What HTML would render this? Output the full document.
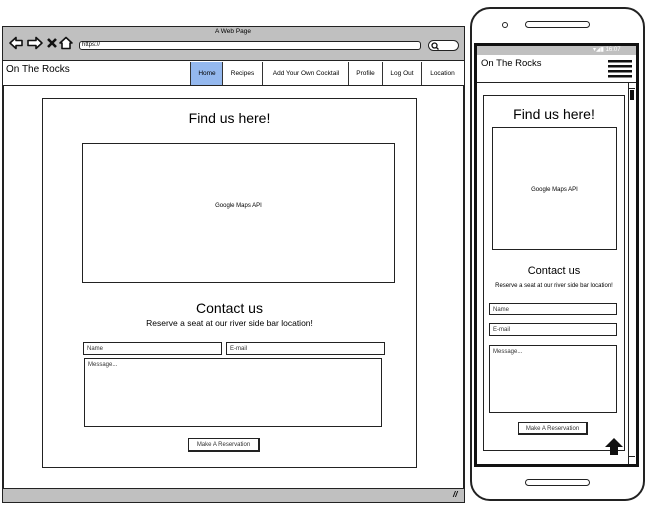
<!DOCTYPE html>
<html><head><meta charset="utf-8"><style>
*{margin:0;padding:0;box-sizing:border-box}
body{width:648px;height:511px;background:#fff;position:relative;overflow:hidden;font-family:"Liberation Sans",sans-serif;color:#000}
.a{position:absolute}
.b{position:absolute;border:1.5px solid #222;background:#fff}
.t{position:absolute;white-space:nowrap}
.in{font-size:6px;padding:3px 3px 0;color:#333;line-height:6px}
.tab{position:absolute;top:62px;height:23px;border-left:1px solid #333;font-size:6.5px;display:flex;align-items:center;justify-content:center}
</style></head><body>
<!-- browser -->
<div class="a" style="left:2px;top:26px;width:463px;height:477px;border:2px solid #222;background:#fff"></div>
<div class="a" style="left:3px;top:27px;width:461px;height:34px;background:#c0c0c0;border-bottom:1px solid #222"></div>
<div class="t" style="left:215px;top:28px;font-size:6.5px">A Web Page</div>
<svg class="a" style="left:8px;top:36px" width="66" height="14" viewBox="0 0 66 14" fill="#fff" stroke="#111" stroke-width="1.6" stroke-linejoin="round">
<path d="M2 7 L8 1.5 V4.5 H14 V9.5 H8 V12.5 Z"/>
<path d="M34 7 L28 1.5 V4.5 H20 V9.5 H28 V12.5 Z"/>
<path d="M40 3 L48 11 M48 3 L40 11" stroke-width="2.6" fill="none"/>
<path d="M52 7 L58 1.5 L64 7 H62 V12.5 H54 V7 Z"/>
</svg>
<div class="a" style="left:79px;top:41px;width:342px;height:9px;background:#fff;border:1.5px solid #222;border-radius:3px"></div>
<div class="t" style="left:82px;top:42px;font-size:6px">https://</div>
<div class="a" style="left:428px;top:40px;width:31px;height:11px;background:#fff;border:1.5px solid #222;border-radius:6px"></div>
<svg class="a" style="left:431px;top:42px" width="8" height="8" viewBox="0 0 8 8"><circle cx="3.5" cy="3.5" r="2.5" fill="none" stroke="#111" stroke-width="1.3"/><path d="M5.5 5.5 L7.5 7.5" stroke="#111" stroke-width="1.3"/></svg>
<div class="a" style="left:3px;top:61px;width:461px;height:25px;border-bottom:1.5px solid #222;background:#fff"></div>
<div class="t" style="left:6px;top:64px;font-size:10px">On The Rocks</div>
<div class="tab" style="left:190px;width:33px;background:#94b8ee">Home</div>
<div class="tab" style="left:222px;width:40px">Recipes</div>
<div class="tab" style="left:262px;width:87px">Add Your Own Cocktail</div>
<div class="tab" style="left:348px;width:34px">Profile</div>
<div class="tab" style="left:382px;width:39px">Log Out</div>
<div class="tab" style="left:421px;width:42px">Location</div>
<div class="a" style="left:3px;top:488px;width:461px;height:14px;background:#c0c0c0;border-top:1.5px solid #222"></div>
<div class="t" style="left:453px;top:490px;font-size:8px;font-style:italic;font-weight:bold">//</div>
<!-- content -->
<div class="b" style="left:42px;top:98px;width:375px;height:370px"></div>
<div class="t" style="left:42px;width:375px;text-align:center;top:110px;font-size:14px">Find us here!</div>
<div class="b" style="left:82px;top:143px;width:313px;height:140px"></div>
<div class="t" style="left:82px;width:313px;text-align:center;top:203px;font-size:6px">Google Maps API</div>
<div class="t" style="left:42px;width:375px;text-align:center;top:300px;font-size:14px">Contact us</div>
<div class="t" style="left:42px;width:375px;text-align:center;top:318px;font-size:8.5px">Reserve a seat at our river side bar location!</div>
<div class="b in" style="left:83px;top:342px;width:139px;height:13px">Name</div>
<div class="b in" style="left:226px;top:342px;width:159px;height:13px">E-mail</div>
<div class="b in" style="left:84px;top:358px;width:298px;height:69px">Message...</div>
<div class="b in" style="left:188px;top:438px;width:72px;height:14px;text-align:center;padding-top:3px;border-width:1.5px 2.5px 2.5px 1.5px">Make A Reservation</div>
<!-- phone -->
<div class="a" style="left:470px;top:7px;width:175px;height:494px;border:2px solid #222;border-radius:20px;background:#fff"></div>
<div class="a" style="left:502px;top:22px;width:6px;height:6px;border:1.5px solid #222;border-radius:50%"></div>
<div class="a" style="left:525px;top:21px;width:65px;height:7px;border:1.5px solid #222;border-radius:4px"></div>
<div class="a" style="left:525px;top:479px;width:65px;height:7px;border:1.5px solid #222;border-radius:4px"></div>
<div class="a" style="left:474px;top:43px;width:165px;height:424px;border:3px solid #111;background:#fff"></div>
<div class="a" style="left:477px;top:46px;width:159px;height:9px;background:#c0c0c0"></div>
<div class="t" style="left:593px;top:46px;font-size:6px;color:#fff">▾◢▮ 16:07</div>
<div class="a" style="left:477px;top:55px;width:159px;height:28px;border-bottom:1.5px solid #222"></div>
<div class="t" style="left:481px;top:58px;font-size:9.5px">On The Rocks</div>
<div class="a" style="left:608px;top:60px;width:24px;height:20px;background:repeating-linear-gradient(#111 0 2.5px,#fff 2.5px 5px)"></div>
<div class="a" style="left:628px;top:83px;width:8px;height:381px;border-left:1px solid #222"></div>
<div class="a" style="left:629px;top:84px;width:6px;height:5px;border:1px solid #222;border-width:0 0 1px 0"></div>
<div class="a" style="left:630px;top:90px;width:4px;height:10px;background:#111"></div>
<div class="a" style="left:629px;top:456px;width:6px;height:6px;border-top:1px solid #222"></div>
<div class="b" style="left:483px;top:95px;width:142px;height:356px;border-width:1px"></div>
<div class="t" style="left:483px;width:142px;text-align:center;top:106px;font-size:14px">Find us here!</div>
<div class="b" style="left:492px;top:127px;width:125px;height:123px;border-width:1px"></div>
<div class="t" style="left:492px;width:125px;text-align:center;top:187px;font-size:6px">Google Maps API</div>
<div class="t" style="left:483px;width:142px;text-align:center;top:265px;font-size:11px">Contact us</div>
<div class="t" style="left:483px;width:142px;text-align:center;top:283px;font-size:6px">Reserve a seat at our river side bar location!</div>
<div class="b in" style="left:489px;top:303px;width:128px;height:12px">Name</div>
<div class="b in" style="left:489px;top:323px;width:128px;height:13px">E-mail</div>
<div class="b in" style="left:489px;top:345px;width:128px;height:68px">Message...</div>
<div class="b in" style="left:518px;top:422px;width:70px;height:13px;text-align:center;border-width:1.5px 2.5px 2.5px 1.5px">Make A Reservation</div>
<svg class="a" style="left:603px;top:436px" width="22" height="20" viewBox="0 0 22 20"><path d="M11 2 L20 11 L15 11 L15 19 L7 19 L7 11 L2 11 Z" fill="#111"/></svg>
</body></html>
